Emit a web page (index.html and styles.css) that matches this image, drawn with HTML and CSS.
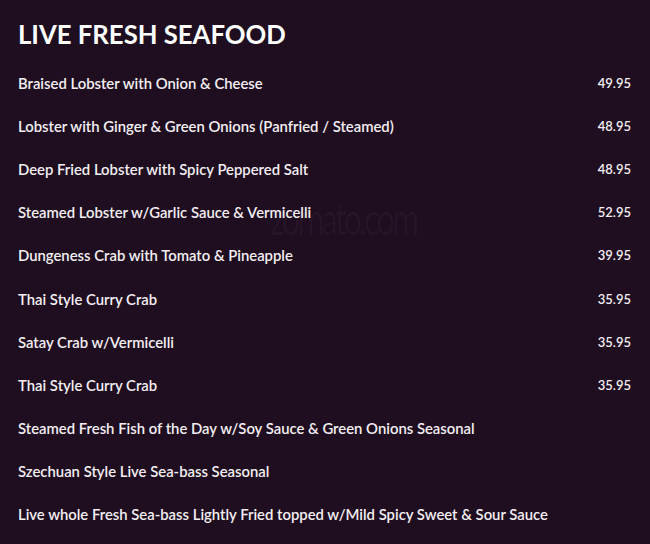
FILE: index.html
```html
<!DOCTYPE html>
<html>
<head>
<meta charset="utf-8">
<link rel="stylesheet" href="styles.css">
</head>
<body>
<div class="menu">
  <h1 class="title">LIVE FRESH SEAFOOD</h1>
  <ul class="items">
    <li class="item"><span class="name">Braised Lobster with Onion &amp; Cheese</span><span class="price">49.95</span></li>
    <li class="item"><span class="name">Lobster with Ginger &amp; Green Onions (Panfried / Steamed)</span><span class="price">48.95</span></li>
    <li class="item"><span class="name">Deep Fried Lobster with Spicy Peppered Salt</span><span class="price">48.95</span></li>
    <li class="item"><span class="name">Steamed Lobster w/Garlic Sauce &amp; Vermicelli</span><span class="price">52.95</span></li>
    <li class="item"><span class="name">Dungeness Crab with Tomato &amp; Pineapple</span><span class="price">39.95</span></li>
    <li class="item"><span class="name">Thai Style Curry Crab</span><span class="price">35.95</span></li>
    <li class="item"><span class="name">Satay Crab w/Vermicelli</span><span class="price">35.95</span></li>
    <li class="item"><span class="name">Thai Style Curry Crab</span><span class="price">35.95</span></li>
    <li class="item"><span class="name">Steamed Fresh Fish of the Day w/Soy Sauce &amp; Green Onions Seasonal</span></li>
    <li class="item"><span class="name">Szechuan Style Live Sea-bass Seasonal</span></li>
    <li class="item"><span class="name">Live whole Fresh Sea-bass Lightly Fried topped w/Mild Spicy Sweet &amp; Sour Sauce</span></li>
  </ul>
  <div class="watermark">zomato.com</div>
</div>
</body>
</html>
```
FILE: styles.css
```css
html, body {
  margin: 0;
  padding: 0;
  background: #1e0e20;
}
body {
  width: 650px;
  height: 544px;
  overflow: hidden;
  font-family: Lato, "Open Sans", sans-serif;
  color: #f4eef2;
}
.menu {
  position: relative;
  padding: 18px 19px 0 18px;
}
.title {
  margin: 0;
  font-size: 25.7px;
  font-weight: 700;
  line-height: 32px;
  color: #ffffff;
}
.items {
  list-style: none;
  margin: 11px 0 0 0;
  padding: 0;
}
.item {
  display: flex;
  justify-content: space-between;
  align-items: center;
  height: 43.2px;
  font-size: 14.85px;
  font-weight: 600;
}
.price {
  font-size: 13px;
  font-weight: 600;
}
.watermark {
  position: absolute;
  left: 270px;
  top: 192px;
  font-size: 44px;
  font-weight: 400;
  color: rgba(255,255,255,0.03);
  letter-spacing: -4px;
  transform: scaleX(0.75);
  transform-origin: left top;
}
```
